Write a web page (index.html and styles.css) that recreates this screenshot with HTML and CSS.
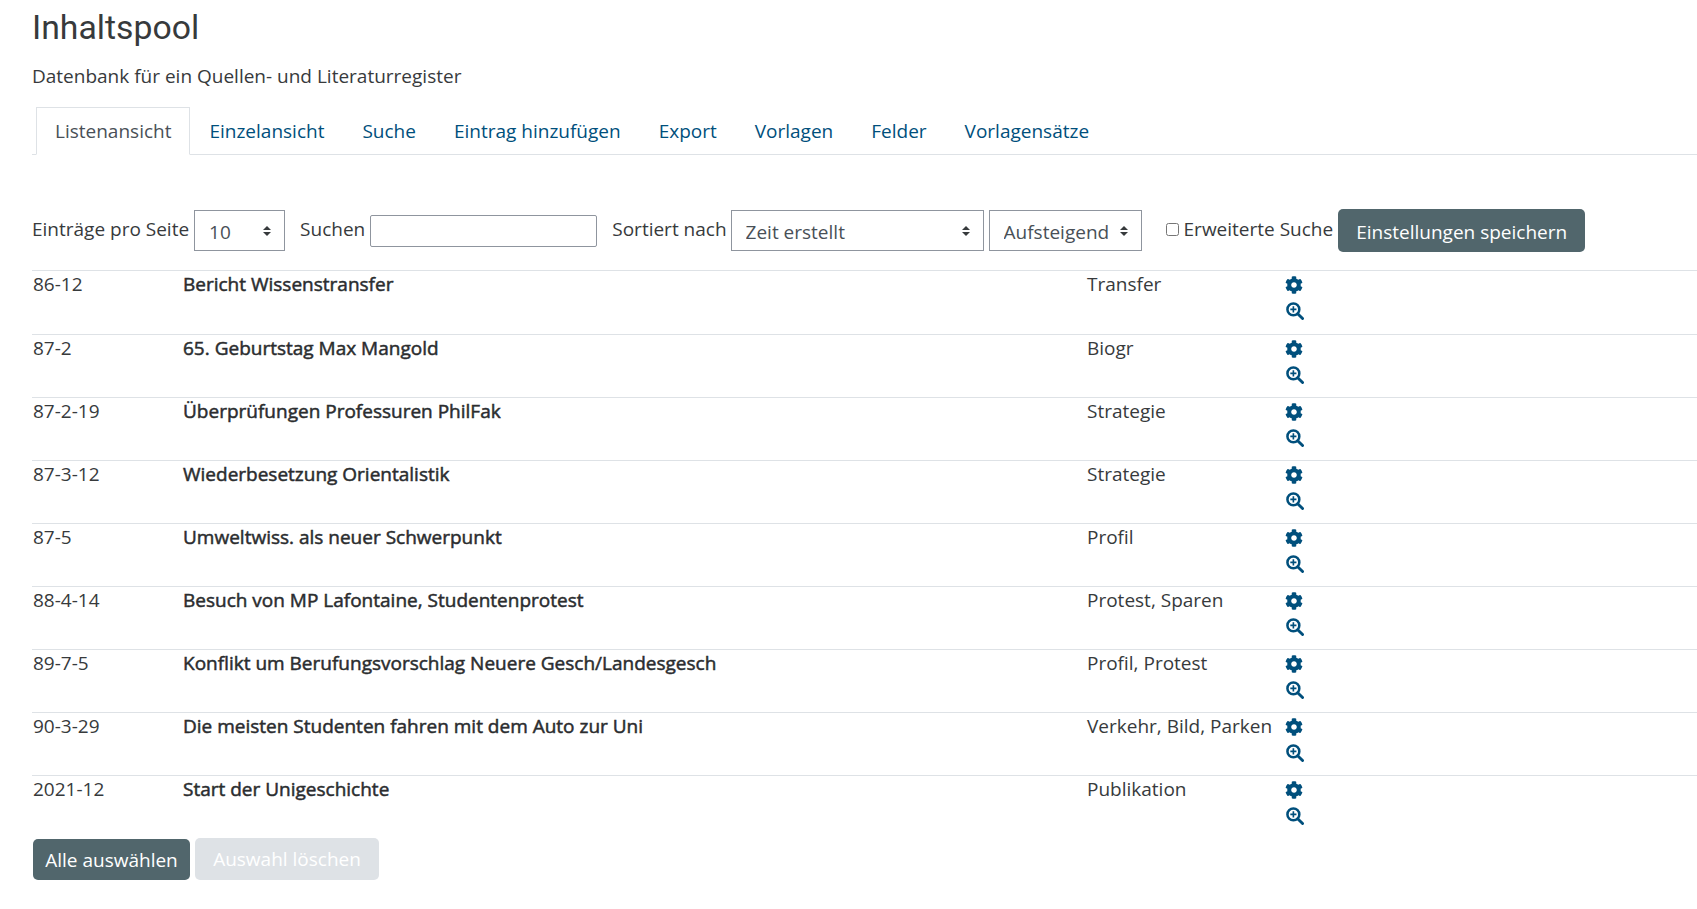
FILE: index.html
```html
<!DOCTYPE html>
<html lang="de">
<head>
    <meta charset="UTF-8">
    <meta name="viewport" content="width=device-width, initial-scale=1.0">
    <title>Inhaltspool</title>
    <link rel="stylesheet" href="styles.css">
</head>
<body>

<svg class="icon-defs" width="0" height="0">
    <symbol id="icon-cog" viewBox="0 0 512 512">
        <path d="M487.4 315.7l-42.6-24.6c4.3-23.2 4.3-47 0-70.2l42.6-24.6c4.9-2.8 7.1-8.6 5.5-14-11.1-35.6-30-67.8-54.7-94.6-3.8-4.1-10-5.1-14.8-2.3L380.8 110c-17.9-15.4-38.5-27.3-60.8-35.1V25.8c0-5.6-3.9-10.5-9.4-11.7-36.7-8.2-74.3-7.8-109.2 0-5.5 1.2-9.4 6.1-9.4 11.7V75c-22.2 7.9-42.8 19.8-60.8 35.1L88.7 85.5c-4.9-2.8-11-1.9-14.8 2.3-24.7 26.7-43.6 58.9-54.7 94.6-1.7 5.4.6 11.2 5.5 14L67.3 221c-4.3 23.2-4.3 47 0 70.2l-42.6 24.6c-4.9 2.8-7.1 8.6-5.5 14 11.1 35.6 30 67.8 54.7 94.6 3.8 4.1 10 5.1 14.8 2.3l42.6-24.6c17.9 15.4 38.5 27.3 60.8 35.1v49.2c0 5.6 3.9 10.5 9.4 11.7 36.7 8.2 74.3 7.8 109.2 0 5.5-1.2 9.4-6.1 9.4-11.7v-49.2c22.2-7.9 42.8-19.8 60.8-35.1l42.6 24.6c4.9 2.8 11 1.9 14.8-2.3 24.7-26.7 43.6-58.9 54.7-94.6 1.5-5.5-.7-11.3-5.6-14.1zM256 336c-44.1 0-80-35.9-80-80s35.9-80 80-80 80 35.9 80 80-35.9 80-80 80z"/>
    </symbol>
    <symbol id="icon-zoom" viewBox="0 0 20 20">
        <circle cx="8.2" cy="8.2" r="6.6" fill="none" stroke="currentColor" stroke-width="2.8"/>
        <path d="M13 13l5.4 5.4" fill="none" stroke="currentColor" stroke-width="3.2" stroke-linecap="round"/>
        <path d="M8.2 4.8v6.8M4.8 8.2h6.8" fill="none" stroke="currentColor" stroke-width="1.8"/>
    </symbol>
</svg>

<h1 class="page-title">Inhaltspool</h1>
<p class="intro">Datenbank für ein Quellen- und Literaturregister</p>

<!-- Tabs -->
<ul class="tabs">
    <li class="tab active">Listenansicht</li>
    <li class="tab"><a href="#">Einzelansicht</a></li>
    <li class="tab"><a href="#">Suche</a></li>
    <li class="tab"><a href="#">Eintrag hinzufügen</a></li>
    <li class="tab"><a href="#">Export</a></li>
    <li class="tab"><a href="#">Vorlagen</a></li>
    <li class="tab"><a href="#">Felder</a></li>
    <li class="tab"><a href="#">Vorlagensätze</a></li>
</ul>

<!-- Filter bar -->
<form class="filters">
    <label for="perPage" class="filter-label">Einträge pro Seite</label>
    <select id="perPage" class="select select-page"><option>10</option></select>
    <label for="search" class="filter-label label-search">Suchen</label>
    <input id="search" class="search-input" type="text">
    <label for="sortBy" class="filter-label label-sort">Sortiert nach</label>
    <select id="sortBy" class="select select-sort"><option>Zeit erstellt</option></select>
    <select class="select select-order"><option>Aufsteigend</option></select>
    <label class="filter-label advanced"><input type="checkbox">Erweiterte Suche</label>
    <button type="button" class="btn btn-save">Einstellungen speichern</button>
</form>

<!-- Entries -->
<table class="entries">
    <tr>
        <td class="col-id">86-12</td>
        <td class="col-title">Bericht Wissenstransfer</td>
        <td class="col-tags">Transfer</td>
        <td class="col-actions"><svg class="icon icon-cog"><use href="#icon-cog"/></svg><svg class="icon icon-zoom"><use href="#icon-zoom"/></svg></td>
    </tr>
    <tr>
        <td class="col-id">87-2</td>
        <td class="col-title">65. Geburtstag Max Mangold</td>
        <td class="col-tags">Biogr</td>
        <td class="col-actions"><svg class="icon icon-cog"><use href="#icon-cog"/></svg><svg class="icon icon-zoom"><use href="#icon-zoom"/></svg></td>
    </tr>
    <tr>
        <td class="col-id">87-2-19</td>
        <td class="col-title">Überprüfungen Professuren PhilFak</td>
        <td class="col-tags">Strategie</td>
        <td class="col-actions"><svg class="icon icon-cog"><use href="#icon-cog"/></svg><svg class="icon icon-zoom"><use href="#icon-zoom"/></svg></td>
    </tr>
    <tr>
        <td class="col-id">87-3-12</td>
        <td class="col-title">Wiederbesetzung Orientalistik</td>
        <td class="col-tags">Strategie</td>
        <td class="col-actions"><svg class="icon icon-cog"><use href="#icon-cog"/></svg><svg class="icon icon-zoom"><use href="#icon-zoom"/></svg></td>
    </tr>
    <tr>
        <td class="col-id">87-5</td>
        <td class="col-title">Umweltwiss. als neuer Schwerpunkt</td>
        <td class="col-tags">Profil</td>
        <td class="col-actions"><svg class="icon icon-cog"><use href="#icon-cog"/></svg><svg class="icon icon-zoom"><use href="#icon-zoom"/></svg></td>
    </tr>
    <tr>
        <td class="col-id">88-4-14</td>
        <td class="col-title">Besuch von MP Lafontaine, Studentenprotest</td>
        <td class="col-tags">Protest, Sparen</td>
        <td class="col-actions"><svg class="icon icon-cog"><use href="#icon-cog"/></svg><svg class="icon icon-zoom"><use href="#icon-zoom"/></svg></td>
    </tr>
    <tr>
        <td class="col-id">89-7-5</td>
        <td class="col-title">Konflikt um Berufungsvorschlag Neuere Gesch/Landesgesch</td>
        <td class="col-tags">Profil, Protest</td>
        <td class="col-actions"><svg class="icon icon-cog"><use href="#icon-cog"/></svg><svg class="icon icon-zoom"><use href="#icon-zoom"/></svg></td>
    </tr>
    <tr>
        <td class="col-id">90-3-29</td>
        <td class="col-title">Die meisten Studenten fahren mit dem Auto zur Uni</td>
        <td class="col-tags">Verkehr, Bild, Parken</td>
        <td class="col-actions"><svg class="icon icon-cog"><use href="#icon-cog"/></svg><svg class="icon icon-zoom"><use href="#icon-zoom"/></svg></td>
    </tr>
    <tr>
        <td class="col-id">2021-12</td>
        <td class="col-title">Start der Unigeschichte</td>
        <td class="col-tags">Publikation</td>
        <td class="col-actions"><svg class="icon icon-cog"><use href="#icon-cog"/></svg><svg class="icon icon-zoom"><use href="#icon-zoom"/></svg></td>
    </tr>
</table>

<div class="bulk-actions">
    <button type="button" class="btn btn-select">Alle auswählen</button>
    <button type="button" class="btn btn-clear" disabled>Auswahl löschen</button>
</div>

</body>
</html>
```

FILE: styles.css
```css
body {
    font-family: "Open Sans", Arial, sans-serif;
    font-size: 19px;
    line-height: 27px;
    color: #373a3c;
    background-color: #fff;
    margin: 0;
    padding: 0 0 0 32px;
    overflow-x: hidden;
}
.icon-defs {
    position: absolute;
}
.page-title {
    font-family: Roboto, Arial, sans-serif;
    font-size: 33.75px;
    font-weight: 400;
    line-height: 38px;
    margin: 9px 0 0 0;
}
.intro {
    margin: 16px 0 0 0;
}
.tabs {
    display: flex;
    list-style: none;
    margin: 17px 0 0 0;
    padding: 0 0 0 4px;
    border-bottom: 1px solid #dee2e6;
    height: 47px;
}
.tab {
    padding: 10px 18px;
    border: 1px solid transparent;
}
.tab a {
    color: #004f7c;
    text-decoration: none;
}
.tab.active {
    color: #495057;
    background-color: #fff;
    border-color: #dee2e6 #dee2e6 #fff;
    height: 48px;
    box-sizing: border-box;
}
.filters {
    display: flex;
    align-items: center;
    margin-top: 53px;
    height: 45px;
}
.filter-label {
    margin-top: -2px;
}
.select {
    appearance: none;
    font-family: inherit;
    font-size: 19px;
    color: #495057;
    height: 41px;
    padding: 2px 30px 0 14px;
    margin-left: 5px;
    border: 1px solid #8f959e;
    border-radius: 0;
    background: #fff url("data:image/svg+xml,%3Csvg xmlns='http://www.w3.org/2000/svg' width='10' height='12'%3E%3Cpath d='M1 5l4-4 4 4zM1 7l4 4 4-4z' fill='%23373a3c'/%3E%3C/svg%3E") no-repeat right 12px center;
}
.select-page {
    width: 91px;
}
.select-sort {
    width: 253px;
    margin-left: 4px;
}
.select-order {
    width: 153px;
}
.label-search {
    margin-left: 15px;
}
.label-sort {
    margin-left: 15px;
}
.search-input {
    width: 227px;
    height: 32px;
    box-sizing: border-box;
    margin-left: 5px;
    border: 1px solid #8f959e;
    border-radius: 2px;
}
.advanced {
    display: flex;
    align-items: center;
    margin-left: 24px;
}
.advanced input {
    width: 13px;
    height: 13px;
    margin: 0 5px 0 0;
}
.btn {
    font-family: inherit;
    font-size: 19px;
    line-height: 27px;
    color: #fff;
    border: none;
    border-radius: 5px;
    padding: 8px 0;
    height: 42px;
    white-space: nowrap;
}
.btn-save {
    background-color: #51666c;
    margin-left: 5px;
    width: 247px;
    height: 43px;
    padding-top: 10px;
}
.entries {
    border-collapse: collapse;
    width: 1665px;
    margin-top: 17px;
    table-layout: fixed;
}
.entries td {
    border-top: 1px solid #dee2e6;
    vertical-align: top;
    padding: 0;
    height: 62px;
}
.entries tr:first-child td {
    height: 63px;
}
.entries .col-id {
    width: 150px;
    padding-left: 1px;
}
.col-title {
    width: 904px;
    color: #2b2d2f;
    -webkit-text-stroke: 0.5px #2b2d2f;
}
.col-tags {
    width: 198px;
}
.col-actions {
    color: #004f7c;
}
.icon {
    display: block;
    fill: currentColor;
}
.icon-cog {
    width: 18px;
    height: 18px;
    margin: 5px 0 0 0;
}
.icon-zoom {
    width: 18px;
    height: 18px;
    margin: 8px 0 0 1px;
}
.bulk-actions {
    display: flex;
    gap: 5px;
}
.btn-select {
    background-color: #51666c;
    width: 157px;
    height: 41px;
    margin: 1px 0 0 1px;
}
.btn-clear {
    background-color: #dee2e6;
    width: 184px;
}
```
